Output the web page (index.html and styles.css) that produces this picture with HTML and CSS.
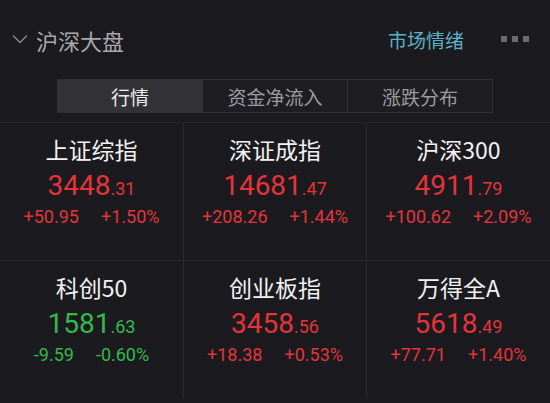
FILE: index.html
```html
<!DOCTYPE html>
<html lang="zh">
<head>
<meta charset="utf-8">
<link rel="stylesheet" href="styles.css">
</head>
<body>
<div class="page">
  <header class="header">
    <div class="title-wrap">
      <svg class="chev" width="16" height="10" viewBox="0 0 16 10"><path d="M1 1.5 L8 8.5 L15 1.5" fill="none" stroke="#8a8a8e" stroke-width="1.3"/></svg>
      <span class="title">沪深大盘</span>
    </div>
    <div class="right">
      <span class="mood">市场情绪</span>
      <span class="dots"><i></i><i></i><i></i></span>
    </div>
  </header>
  <nav class="tabs">
    <div class="tab active">行情</div>
    <div class="tab">资金净流入</div>
    <div class="tab">涨跌分布</div>
  </nav>
  <section class="grid">
    <div class="card">
      <div class="name">上证综指</div>
      <div class="price up"><span class="int">3448</span><span class="dec">.31</span></div>
      <div class="chg up"><span>+50.95</span><span>+1.50%</span></div>
    </div>
    <div class="card">
      <div class="name">深证成指</div>
      <div class="price up"><span class="int">14681</span><span class="dec">.47</span></div>
      <div class="chg up"><span>+208.26</span><span>+1.44%</span></div>
    </div>
    <div class="card">
      <div class="name">沪深300</div>
      <div class="price up"><span class="int">4911</span><span class="dec">.79</span></div>
      <div class="chg up"><span>+100.62</span><span>+2.09%</span></div>
    </div>
    <div class="card">
      <div class="name">科创50</div>
      <div class="price down"><span class="int">1581</span><span class="dec">.63</span></div>
      <div class="chg down"><span>-9.59</span><span>-0.60%</span></div>
    </div>
    <div class="card">
      <div class="name">创业板指</div>
      <div class="price up"><span class="int">3458</span><span class="dec">.56</span></div>
      <div class="chg up"><span>+18.38</span><span>+0.53%</span></div>
    </div>
    <div class="card">
      <div class="name">万得全A</div>
      <div class="price up"><span class="int">5618</span><span class="dec">.49</span></div>
      <div class="chg up"><span>+77.71</span><span>+1.40%</span></div>
    </div>
  </section>
</div>
</body>
</html>
```
FILE: styles.css
```css
html, body {
  margin: 0;
  padding: 0;
  background: #1b1b1f;
}
body {
  width: 550px;
  height: 403px;
  overflow: hidden;
  font-family: "Noto Sans", "Noto Sans CJK SC", sans-serif;
}
.page {
  display: flex;
  flex-direction: column;
}
.header {
  height: 79px;
  display: flex;
  align-items: center;
  justify-content: space-between;
  padding: 0 21px 0 12px;
  box-sizing: border-box;
}
.title-wrap {
  display: flex;
  align-items: center;
  gap: 8px;
}
.chev {
  display: block;
  margin-top: -2px;
}
.title {
  font-family: "Noto Sans CJK SC", sans-serif;
  font-size: 22px;
  line-height: 30px;
  color: #a9a9ad;
}
.right {
  display: flex;
  align-items: center;
  gap: 37px;
}
.mood {
  font-family: "Noto Sans CJK SC", sans-serif;
  font-size: 19px;
  line-height: 26px;
  color: #5cb1c6;
}
.dots {
  display: flex;
  gap: 5px;
  margin-top: -1px;
}
.dots i {
  display: block;
  width: 6px;
  height: 6px;
  background: #6c6c70;
}
.tabs {
  margin-left: 57px;
  width: 436px;
  height: 34px;
  display: flex;
  border: 1px solid #303034;
  box-sizing: border-box;
}
.tab {
  flex: 1;
  display: flex;
  align-items: center;
  justify-content: center;
  font-family: "Noto Sans CJK SC", sans-serif;
  font-size: 19px;
  color: #9c9ca0;
  background: #1e1e22;
  border-left: 1px solid #303034;
}
.tab:first-child {
  border-left: none;
}
.tab.active {
  background: #333337;
  color: #ececec;
}
.grid {
  margin-top: 9px;
  display: grid;
  grid-template-columns: 183px 182px 183px;
  grid-auto-rows: 137px;
  gap: 1px;
  background: #2a2a2f;
  border-top: 1px solid #242428;
}
.card {
  background: #1b1b1f;
  display: flex;
  flex-direction: column;
  align-items: center;
  padding-top: 11px;
  box-sizing: border-box;
}
.name {
  font-family: "Noto Sans CJK SC", sans-serif;
  font-size: 23px;
  line-height: 30px;
  color: #f2f2f2;
}
.price {
  margin-top: 5px;
  line-height: 34px;
  font-family: "Roboto", "Noto Sans", sans-serif;
  white-space: nowrap;
}
.int {
  font-size: 28px;
}
.dec {
  font-size: 18px;
}
.chg {
  margin-top: -1px;
  display: flex;
  gap: 22px;
  font-family: "Roboto", "Noto Sans", sans-serif;
  font-size: 18px;
  line-height: 22px;
}
.up { color: #e3343c; }
.down { color: #33b84c; }
```
